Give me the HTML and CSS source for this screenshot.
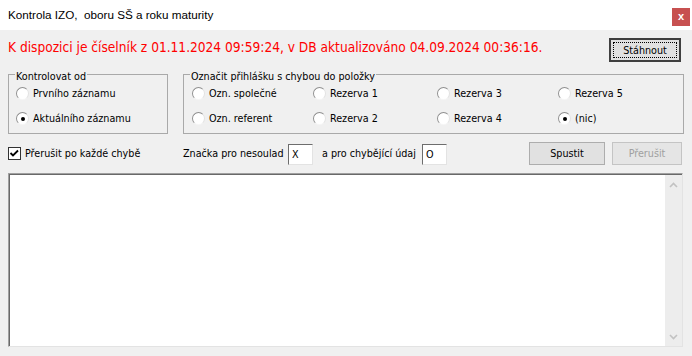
FILE: index.html
```html
<!DOCTYPE html>
<html lang="cs">

<head>
    <meta charset="UTF-8">
    <meta name="viewport" content="width=device-width, initial-scale=1.0">
    <title>Kontrola IZO, oboru SŠ a roku maturity</title>
    <link rel="stylesheet" href="styles.css">
</head>

<body>
    <div class="titlebar">
        <span class="title">Kontrola IZO,&nbsp; oboru SŠ a roku maturity</span>
        <span class="close">x</span>
    </div>

    <div class="content">

        <div class="status">
            <p class="info">K dispozici je číselník z 01.11.2024 09:59:24, v DB aktualizováno 04.09.2024 00:36:16.</p>
            <button class="btn btn-default">Stáhnout</button>
        </div>

        <div class="groups">
            <div class="group group-start">
                <div class="group-title">Kontrolovat od</div>
                <div class="radios">
                    <label class="radio"><span class="dot"></span>Prvního záznamu</label>
                    <label class="radio checked"><span class="dot"></span>Aktuálního záznamu</label>
                </div>
            </div>

            <div class="group group-mark">
                <div class="group-title">Označit přihlášku s chybou do položky</div>
                <div class="radios radios-grid">
                    <label class="radio"><span class="dot"></span>Ozn. společné</label>
                    <label class="radio"><span class="dot"></span>Rezerva 1</label>
                    <label class="radio"><span class="dot"></span>Rezerva 3</label>
                    <label class="radio"><span class="dot"></span>Rezerva 5</label>
                    <label class="radio"><span class="dot"></span>Ozn. referent</label>
                    <label class="radio"><span class="dot"></span>Rezerva 2</label>
                    <label class="radio"><span class="dot"></span>Rezerva 4</label>
                    <label class="radio checked"><span class="dot"></span>(nic)</label>
                </div>
            </div>
        </div>

        <div class="options">
            <label class="check">
                <span class="box">
                    <svg width="11" height="11" viewBox="0 0 11 11">
                        <polyline points="1.5,5 4,7.5 9,2.5" fill="none" stroke="#000" stroke-width="1.8" />
                    </svg>
                </span>
                Přerušit po každé chybě
            </label>
            <span class="field-label label-mismatch">Značka pro nesoulad</span>
            <input class="field" type="text" value="X" readonly>
            <span class="field-label label-missing">a pro chybějící údaj</span>
            <input class="field" type="text" value="O" readonly>
            <button class="btn btn-run">Spustit</button>
            <button class="btn btn-stop" disabled>Přerušit</button>
        </div>

        <div class="log">
            <div class="log-body"></div>
            <div class="scrollbar">
                <svg width="9" height="6" viewBox="0 0 9 6">
                    <polyline points="1,5 4.5,1.5 8,5" fill="none" stroke="#c2c2c2" stroke-width="1.6" />
                </svg>
                <svg width="9" height="6" viewBox="0 0 9 6">
                    <polyline points="1,1 4.5,4.5 8,1" fill="none" stroke="#c2c2c2" stroke-width="1.6" />
                </svg>
            </div>
        </div>

    </div>
</body>

</html>
```

FILE: styles.css
```css
body {
    margin: 0;
    background-color: #f0f0f0;
    font-family: "DejaVu Sans Condensed", "Liberation Sans", Arial, sans-serif;
    font-size: 10.7px;
    color: #000;
}

.titlebar {
    height: 30px;
    background-color: #fff;
    display: flex;
    justify-content: space-between;
    align-items: flex-start;
    padding: 0 2px 0 8px;
}

.title {
    margin-top: 8px;
    font-family: "Liberation Sans", Arial, sans-serif;
    font-size: 11.7px;
    line-height: 14px;
}

.close {
    margin-top: 8px;
    width: 18px;
    height: 18px;
    background-color: #c75050;
    color: #fff;
    font-family: "Liberation Sans", Arial, sans-serif;
    font-weight: bold;
    font-size: 11px;
    line-height: 17px;
    text-align: center;
}

.content {
    padding: 0 8px;
}

.status {
    display: flex;
    justify-content: space-between;
    margin-top: 8px;
    height: 24px;
}

.info {
    margin: 1px 0 0;
    color: #ff0000;
    font-size: 13.6px;
    line-height: 17px;
}

.btn {
    font-family: "DejaVu Sans Condensed", "Liberation Sans", Arial, sans-serif;
    font-size: 10.7px;
    color: #000;
    background-color: #e1e1e1;
    border: 1px solid #adadad;
    padding: 0;
}

.btn-default {
    width: 72px;
    height: 24px;
    margin-right: 3px;
    border: 2px solid #3f3f3f;
    outline: 1px dotted #000;
    outline-offset: -5px;
}

.groups {
    display: flex;
    gap: 15px;
    margin-top: 12px;
}

.group {
    box-sizing: border-box;
    height: 60px;
    border: 1px solid #a9a9a9;
    padding-left: 6px;
}

.group-start {
    width: 160px;
}

.group-mark {
    width: 501px;
}

.group-title {
    width: max-content;
    margin-top: -5px;
    padding: 0 1px;
    line-height: 13px;
    background-color: #f0f0f0;
}

.radios {
    display: grid;
    grid-auto-rows: 25px;
    margin-top: -2px;
    padding-left: 1px;
}

.radios-grid {
    grid-template-columns: 121px 124px 121px auto;
    padding-left: 2px;
}

.radio {
    display: flex;
    align-items: center;
}

.dot {
    box-sizing: border-box;
    width: 13px;
    height: 13px;
    margin-right: 4px;
    border-radius: 50%;
    border: 1px solid;
    border-color: #8f8f8f #e2e2e2 #f6f6f6 #8f8f8f;
    background-color: #fff;
    display: flex;
    align-items: center;
    justify-content: center;
}

.radio.checked .dot::after {
    content: "";
    width: 4px;
    height: 4px;
    border-radius: 50%;
    background-color: #000;
}

.options {
    display: flex;
    align-items: center;
    height: 23px;
    margin-top: 8px;
}

.check {
    width: 175px;
    display: flex;
    align-items: center;
}

.box {
    box-sizing: border-box;
    width: 13px;
    height: 13px;
    margin-right: 4px;
    border: 1px solid #333;
    background-color: #fff;
    display: flex;
}

.field-label.label-mismatch {
    width: 105px;
}

.field-label.label-missing {
    width: 100px;
    margin-left: 9px;
}

.field {
    box-sizing: border-box;
    width: 25px;
    height: 21px;
    margin: 1px 0 0;
    padding: 0 0 0 3px;
    font-family: "DejaVu Sans Condensed", "Liberation Sans", Arial, sans-serif;
    font-size: 10.7px;
    border: 1px solid;
    border-color: #6d6d6d #e3e3e3 #e3e3e3 #6d6d6d;
    background-color: #fff;
    outline: none;
}

.btn-run {
    width: 76px;
    height: 23px;
    margin-left: auto;
}

.btn-stop {
    width: 70px;
    height: 23px;
    margin-left: 7px;
    margin-right: 2px;
    color: #a0a0a0;
    border-color: #c4c4c4;
    background-color: #e5e5e5;
}

.log {
    box-sizing: border-box;
    display: flex;
    height: 174px;
    margin: 8px 1px 0 0;
    border: 1px solid;
    border-color: #a0a0a0 #e3e3e3 #e3e3e3 #a0a0a0;
    box-shadow: inset 1px 1px 0 #696969;
    background-color: #fff;
}

.log-body {
    flex: 1;
}

.scrollbar {
    width: 17px;
    margin-top: 1px;
    background-color: #ededed;
    display: flex;
    flex-direction: column;
    justify-content: space-between;
    align-items: center;
    padding: 7px 0 6px;
}
```
